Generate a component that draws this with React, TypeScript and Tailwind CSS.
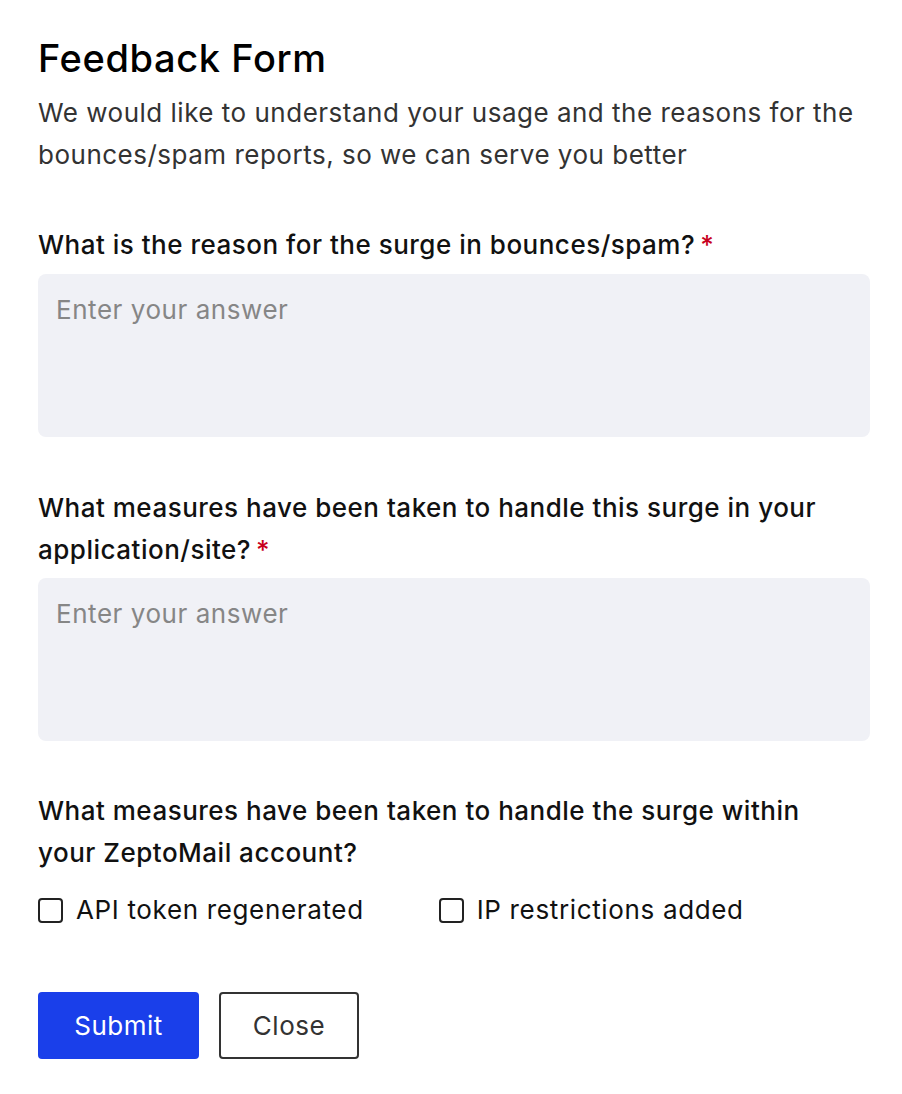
import React from "react";

function Label({ children, required }: { children: React.ReactNode; required?: boolean }) {
  return (
    <div className="max-w-[800px] text-[26px] leading-[42px] font-medium tracking-[0.5px] text-[#111]">
      {children}
      {required && <span className="text-[#c8001e] ml-[5px]">*</span>}
    </div>
  );
}

function Area() {
  return (
    <textarea
      placeholder="Enter your answer"
      className="block w-full h-[163px] resize-none rounded-[8px] bg-[#f0f1f6] px-[18px] py-[15px] text-[26px] leading-[42px] tracking-[0.55px] text-[#222] placeholder:text-[#868686] outline-none"
    />
  );
}

function Check({ label }: { label: string }) {
  return (
    <label className="flex items-center gap-[13px] text-[26px] leading-[42px] tracking-[0.65px] text-[#111]">
      <span className="block w-[25px] h-[25px] rounded-[4px] border-[2px] border-[#222] bg-white" />
      {label}
    </label>
  );
}

export default function App() {
  return (
    <div
      className="w-[902px] min-h-[1094px] bg-white pl-[38px] pr-[32px] pt-[36px]"
      style={{ fontFamily: "Inter, 'Noto Sans', sans-serif" }}
    >
      <h1 className="text-[38px] leading-[44px] font-medium tracking-[0.6px] text-[#000]">Feedback Form</h1>
      <p className="mt-[12px] text-[26px] leading-[42px] tracking-[0.5px] text-[#333]">
        We would like to understand your usage and the reasons for the bounces/spam reports, so we can serve you better
      </p>

      <div className="mt-[48px]">
        <Label required>What is the reason for the surge in bounces/spam?</Label>
        <div className="mt-[8px]">
          <Area />
        </div>
      </div>

      <div className="mt-[50px]">
        <Label required>What measures have been taken to handle this surge in your application/site?</Label>
        <div className="mt-[7px]">
          <Area />
        </div>
      </div>

      <div className="mt-[49px]">
        <Label>What measures have been taken to handle the surge within your ZeptoMail account?</Label>
        <div className="mt-[15px] flex gap-[75px]">
          <Check label="API token regenerated" />
          <Check label="IP restrictions added" />
        </div>
      </div>

      <div className="mt-[61px] flex gap-[20px]">
        <button className="w-[161px] h-[67px] rounded-[4px] bg-[#1a3fea] text-white text-[26px] tracking-[0.5px]">Submit</button>
        <button className="w-[140px] h-[67px] rounded-[4px] border-[2px] border-[#333] bg-white text-[#333] text-[26px] tracking-[0.5px]">Close</button>
      </div>
    </div>
  );
}
